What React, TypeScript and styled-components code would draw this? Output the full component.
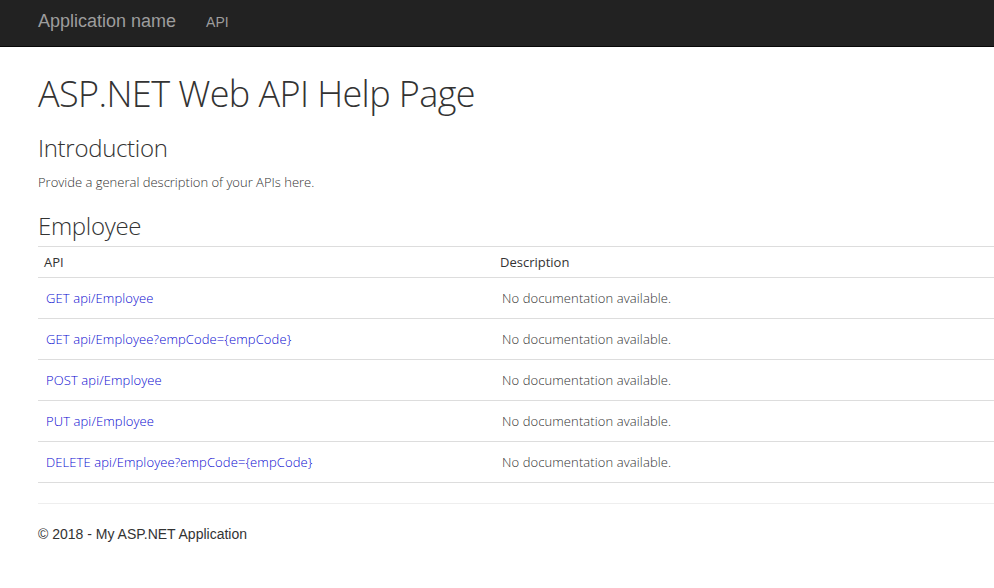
import styled, { createGlobalStyle } from 'styled-components'

const GlobalStyle = createGlobalStyle`
	html, body {
		margin: 0;
		padding: 0;
		background: #fff;
	}
	body {
		font-family: 'Open Sans', 'Liberation Sans', sans-serif;
		color: #333;
		overflow: hidden;
	}
`

const apis = [
	'GET api/Employee',
	'GET api/Employee?empCode={empCode}',
	'POST api/Employee',
	'PUT api/Employee',
	'DELETE api/Employee?empCode={empCode}',
]

export default function App() {
	return (
		<>
			<GlobalStyle />
			<Navbar>
				<Brand>Application name</Brand>
				<NavLink>API</NavLink>
			</Navbar>
			<Body>
				<Title>ASP.NET Web API Help Page</Title>
				<SubTitle $gap={13}>Introduction</SubTitle>
				<Intro>Provide a general description of your APIs here.</Intro>
				<SubTitle $gap={19}>Employee</SubTitle>
				<Table>
					<HeadRow>
						<HeadCell>API</HeadCell>
						<HeadCell $shift>Description</HeadCell>
					</HeadRow>
					{apis.map(api => (
						<Row key={api}>
							<ApiLink>{api}</ApiLink>
							<Cell>No documentation available.</Cell>
						</Row>
					))}
				</Table>
				<Rule />
				<Footer>© 2018 - My ASP.NET Application</Footer>
			</Body>
		</>
	)
}

const Navbar = styled.nav`
	display: flex;
	align-items: center;
	height: 47px;
	background: #222;
	border-bottom: 1px solid #080808;
	padding: 0 0 3px 38px;
	box-sizing: border-box;
	font-family: 'Liberation Sans', Arial, sans-serif;
`

const Brand = styled.span`
	font-size: 18px;
	color: #9d9d9d;
	margin-right: 30px;
`

const NavLink = styled.span`
	font-size: 14px;
	color: #9d9d9d;
`

const Body = styled.main`
	padding-left: 38px;
`

const Title = styled.h1`
	margin: 22px 0 0;
	font-size: 36px;
	font-weight: 300;
	line-height: 50px;
	color: #333;
	letter-spacing: -0.6px;
`

const SubTitle = styled.h2<{ $gap?: number }>`
	margin: ${({ $gap }) => $gap ?? 20}px 0 0;
	font-size: 24px;
	font-weight: 300;
	line-height: 32px;
	color: #333;
	letter-spacing: -0.3px;
`

const Intro = styled.p`
	margin: 9px 0 0;
	font-size: 13px;
	font-weight: 300;
	line-height: 18px;
	color: #333;
`

const Table = styled.div`
	margin-top: 4px;
	border-top: 1px solid #ddd;
`

const HeadRow = styled.div`
	display: grid;
	grid-template-columns: 462px 1fr;
	height: 30px;
	align-items: center;
	border-bottom: 1px solid #ddd;
`

const HeadCell = styled.div<{ $shift?: boolean }>`
	padding-left: ${({ $shift }) => ($shift ? 0 : 6)}px;
	font-size: 13px;
	color: #333;
`

const Row = styled.div`
	display: grid;
	grid-template-columns: 464px 1fr;
	height: 40px;
	align-items: center;
	border-bottom: 1px solid #ddd;
`

const ApiLink = styled.a`
	padding-left: 8px;
	font-size: 13px;
	font-weight: 300;
	color: #0a0ad0;
	text-decoration: none;
	letter-spacing: 0.1px;
`

const Cell = styled.div`
	font-size: 13px;
	font-weight: 300;
	color: #333;
	letter-spacing: 0.1px;
`

const Rule = styled.hr`
	margin: 20px 0 0;
	border: 0;
	border-top: 1px solid #eee;
`

const Footer = styled.footer`
	margin-top: 22px;
	font-family: 'Liberation Sans', Arial, sans-serif;
	font-size: 14px;
	color: #333;
`
